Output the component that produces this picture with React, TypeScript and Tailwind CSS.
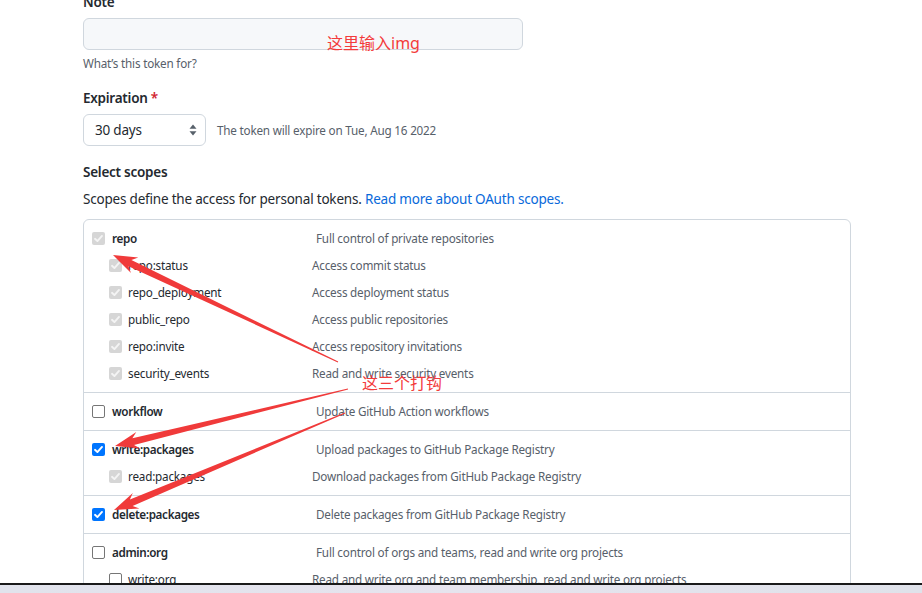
import React from "react";

type State = "checked" | "unchecked" | "disabled";

function Box({ state }: { state: State }) {
  if (state === "unchecked") {
    return <span className="block w-[13px] h-[13px] shrink-0 rounded-[2px] border border-[#767676] bg-white" />;
  }
  const bg = state === "checked" ? "bg-[#0075ff]" : "bg-[#d6d6d6]";
  const stroke = state === "checked" ? "#ffffff" : "#f4f4f4";
  return (
    <span className={`flex w-[13px] h-[13px] shrink-0 items-center justify-center rounded-[2px] ${bg}`}>
      <svg width="13" height="13" viewBox="0 0 13 13">
        <path d="M3 6.8 L5.4 9.1 L10 3.9" fill="none" stroke={stroke} strokeWidth="1.9" strokeLinecap="round" strokeLinejoin="round" />
      </svg>
    </span>
  );
}

type Row = { name: string; desc: string; state: State };
type Group = { parent: Row; children?: Row[] };

const groups: Group[] = [
  {
    parent: { name: "repo", desc: "Full control of private repositories", state: "disabled" },
    children: [
      { name: "repo:status", desc: "Access commit status", state: "disabled" },
      { name: "repo_deployment", desc: "Access deployment status", state: "disabled" },
      { name: "public_repo", desc: "Access public repositories", state: "disabled" },
      { name: "repo:invite", desc: "Access repository invitations", state: "disabled" },
      { name: "security_events", desc: "Read and write security events", state: "disabled" },
    ],
  },
  { parent: { name: "workflow", desc: "Update GitHub Action workflows", state: "unchecked" } },
  {
    parent: { name: "write:packages", desc: "Upload packages to GitHub Package Registry", state: "checked" },
    children: [{ name: "read:packages", desc: "Download packages from GitHub Package Registry", state: "disabled" }],
  },
  { parent: { name: "delete:packages", desc: "Delete packages from GitHub Package Registry", state: "checked" } },
  {
    parent: { name: "admin:org", desc: "Full control of orgs and teams, read and write org projects", state: "unchecked" },
    children: [
      { name: "write:org", desc: "Read and write org and team membership, read and write org projects", state: "unchecked" },
      { name: "read:org", desc: "Read org and team membership, read org projects", state: "unchecked" },
    ],
  },
];

function arrow(tail: [number, number], tip: [number, number], hl = 24, hw = 8.5, sw = 3.5) {
  const dx = tip[0] - tail[0];
  const dy = tip[1] - tail[1];
  const len = Math.hypot(dx, dy);
  const ux = dx / len;
  const uy = dy / len;
  const nx = -uy;
  const ny = ux;
  const base: [number, number] = [tip[0] - ux * hl, tip[1] - uy * hl];
  const notch: [number, number] = [tip[0] - ux * hl * 0.78, tip[1] - uy * hl * 0.78];
  const p = (pt: [number, number], k: number) => `${(pt[0] + nx * k).toFixed(1)},${(pt[1] + ny * k).toFixed(1)}`;
  return [
    p(tail, 0.4),
    p(notch, sw),
    p(base, hw),
    `${tip[0]},${tip[1]}`,
    p(base, -hw),
    p(notch, -sw),
    p(tail, -0.4),
  ].join(" ");
}

export default function App() {
  return (
    <div
      className="relative w-[922px] h-[593px] overflow-hidden bg-white text-[#24292f]"
      style={{ fontFamily: '"Noto Sans", "Noto Sans CJK SC", sans-serif' }}
    >
      <div className="pl-[83px] -mt-[8px]">
        <div className="text-[13.5px] tracking-[-0.25px] leading-[21px] font-semibold">Note</div>
        <div className="mt-[5px] w-[440px] h-[32px] rounded-md border border-[#d0d7de] bg-[#f6f8fa]" />
        <div className="mt-[4px] text-[11.7px] tracking-[-0.2px] leading-[18px] text-[#57606a]">What’s this token for?</div>
        <div className="mt-[16px] text-[13.5px] tracking-[-0.25px] leading-[21px] font-semibold">
          Expiration <span className="text-[#d1242f]">*</span>
        </div>
        <div className="mt-[5px] flex items-center gap-[11px]">
          <div className="flex w-[123px] h-[32px] items-center justify-between rounded-md border border-[#d0d7de] bg-white pl-[11px] pr-[8px] text-[13.5px] tracking-[-0.2px]">
            <span>30 days</span>
            <svg width="8" height="12" viewBox="0 0 8 12">
              <path d="M4 0.5 L7.5 4.8 L0.5 4.8 Z" fill="#57606a" />
              <path d="M4 11.5 L7.5 7.2 L0.5 7.2 Z" fill="#57606a" />
            </svg>
          </div>
          <span className="text-[11.7px] tracking-[-0.2px] leading-[18px] text-[#57606a]">The token will expire on Tue, Aug 16 2022</span>
        </div>
        <div className="mt-[16px] text-[13.5px] tracking-[-0.25px] leading-[21px] font-semibold">Select scopes</div>
        <div className="mt-[6px] text-[13.5px] tracking-[-0.2px] leading-[21px]">
          Scopes define the access for personal tokens. <span className="text-[#0969da]">Read more about OAuth scopes.</span>
        </div>
        <div className="mt-[9px] w-[768px] rounded-md border border-[#d0d7de]">
          {groups.map((g) => (
            <div key={g.parent.name} className="border-b border-[#d0d7de] py-[5px]">
              <div className="flex h-[27px] items-center">
                <div className="flex w-[232px] items-center gap-[7px] pl-[8px]">
                  <Box state={g.parent.state} />
                  <span className="text-[11.7px] tracking-[-0.35px] font-semibold">{g.parent.name}</span>
                </div>
                <span className="text-[11.7px] tracking-[-0.2px] text-[#57606a]">{g.parent.desc}</span>
              </div>
              {g.children?.map((c) => (
                <div key={c.name} className="flex h-[27px] items-center">
                  <div className="flex w-[228px] items-center gap-[6px] pl-[25px]">
                    <Box state={c.state} />
                    <span className="text-[11.7px] tracking-[-0.2px]">{c.name}</span>
                  </div>
                  <span className="text-[11.7px] tracking-[-0.2px] text-[#57606a]">{c.desc}</span>
                </div>
              ))}
            </div>
          ))}
        </div>
      </div>

      <div className="absolute left-[327px] top-[32px] text-[16px] leading-[22px] text-[#f33b3b]">这里输入img</div>
      <div className="absolute left-[362px] top-[372px] text-[16px] leading-[22px] text-[#f33b3b]">这三个打钩</div>

      <svg className="absolute left-0 top-0" width="922" height="593" viewBox="0 0 922 593">
        <polygon points={arrow([338, 362], [113, 255])} fill="#f03a3a" />
        <polygon points={arrow([348, 389], [115, 446])} fill="#f03a3a" />
        <polygon points={arrow([345, 413], [114, 510])} fill="#f03a3a" />
      </svg>

      <div className="absolute bottom-0 left-0 w-[922px] h-[10px] border-t-2 border-[#1a1a1a] bg-gradient-to-r from-[#e1e3ec] via-[#e6e4ee] to-[#dfe2ea]" />
    </div>
  );
}
